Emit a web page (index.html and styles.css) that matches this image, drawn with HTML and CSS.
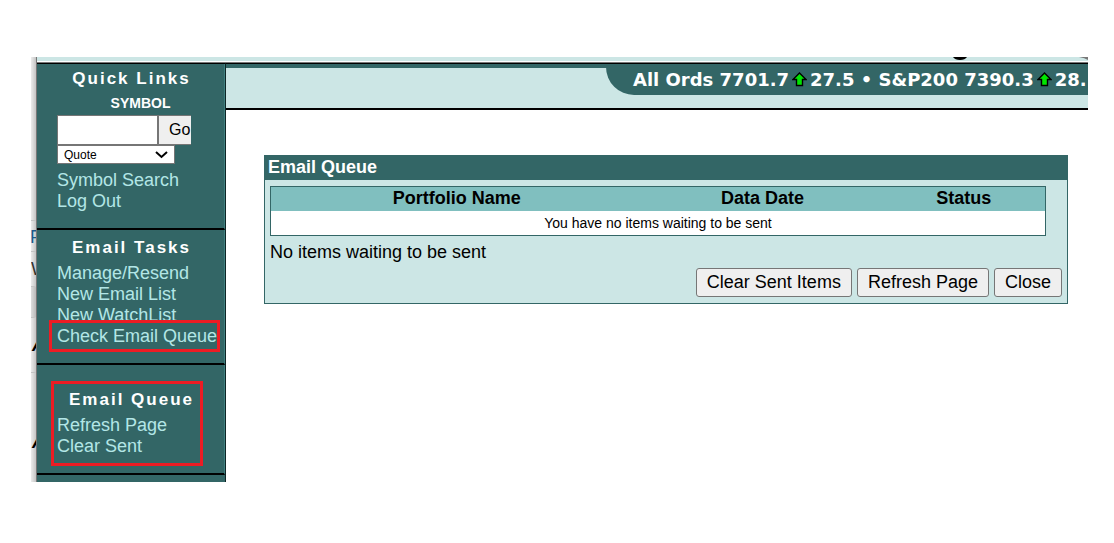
FILE: index.html
```html
<!DOCTYPE html>
<html lang="en">
<head>
  <meta charset="UTF-8">
  <meta name="viewport" content="width=device-width, initial-scale=1.0">
  <title>Email Queue</title>
  <link rel="stylesheet" href="styles.css">
</head>
<body>

  <div class="screen">

    <!-- edge of the window behind -->
    <div class="behind">
      <span class="behind-row first blue">P</span>
      <span class="behind-row short">W</span>
      <span class="behind-row shade"></span>
      <span class="behind-row tall">A</span>
      <span class="behind-row last">A</span>
    </div>

    <div class="window">
      <div class="banner">
        <svg class="banner-tail" width="14" height="3" viewBox="0 0 14 3"><path d="M0 0h14q-2 3-7 3t-7-3z"/></svg>
        <svg class="banner-corner" width="9" height="3" viewBox="0 0 9 3"><path d="M0 0h9v3q-3-2-9-3z"/></svg>
      </div>

      <div class="columns">
        <nav class="sidebar">
          <section class="menu quick">
            <h2>Quick Links</h2>
            <form class="search">
              <label for="symbol">SYMBOL</label>
              <div class="search-row">
                <input type="text" id="symbol">
                <button type="button">Go</button>
              </div>
              <div class="select-wrap">
                <select id="type" aria-label="Type">
                  <option>Quote</option>
                </select>
                <svg width="13" height="8" viewBox="0 0 13 8"><path d="M1 1l5.500 5 5.500-5"/></svg>
              </div>
            </form>
            <a href="#">Symbol Search</a>
            <a href="#">Log Out</a>
          </section>

          <section class="menu tasks">
            <h2>Email Tasks</h2>
            <a href="#">Manage/Resend</a>
            <a href="#">New Email List</a>
            <a href="#">New WatchList</a>
            <a href="#" class="marked">Check Email Queue</a>
          </section>

          <section class="menu queue">
            <h2>Email Queue</h2>
            <a href="#">Refresh Page</a>
            <a href="#">Clear Sent</a>
          </section>
        </nav>

        <main class="main">
          <div class="header">
            <div class="ticker">
              <span>All Ords 7701.7</span>
              <svg width="15" height="15" viewBox="0 0 15 15"><path d="M7.500 1L14 7.500H10.500V13.500H4.500V7.500H1z"/></svg>
              <span>27.5 • S&amp;P200 7390.3</span>
              <svg width="15" height="15" viewBox="0 0 15 15"><path d="M7.500 1L14 7.500H10.500V13.500H4.500V7.500H1z"/></svg>
              <span>28.</span>
            </div>
          </div>

          <div class="panel">
            <h1>Email Queue</h1>
            <div class="panel-body">
              <table>
                <thead>
                  <tr>
                    <th class="col-name">Portfolio Name</th>
                    <th class="col-date">Data Date</th>
                    <th class="col-status">Status</th>
                  </tr>
                </thead>
                <tbody>
                  <tr>
                    <td colspan="3">You have no items waiting to be sent</td>
                  </tr>
                </tbody>
              </table>
              <p>No items waiting to be sent</p>
              <div class="buttons">
                <button type="button">Clear Sent Items</button>
                <button type="button">Refresh Page</button>
                <button type="button">Close</button>
              </div>
            </div>
          </div>
        </main>
      </div>
    </div>

  </div>

</body>
</html>
```
FILE: styles.css
```css
* {
  box-sizing: border-box;
}

body {
  margin: 0;
  background: #fff;
  color: #000;
  font-family: Arial, "Liberation Sans", sans-serif;
  font-size: 18px;
}

.screen {
  display: flex;
  margin: 57px 26px 60px 31px;
  overflow: hidden;
}

/* window behind */
.behind {
  width: 6px;
  flex: none;
  overflow: hidden;
  padding-top: 163px;
  background: linear-gradient(to right, #ececec, #c4c4c4);
  border-right: 1px solid #777;
}

.behind-row {
  display: block;
  height: 55px;
  border-top: 1px solid #c4c4c4;
  line-height: 54px;
  color: #333;
}

.behind-row.first {
  height: 31px;
  line-height: 32px;
}

.behind-row.blue {
  text-indent: -1px;
  color: #1c5a8c;
}

.behind-row.short {
  height: 35px;
  line-height: 35px;
}

.behind-row.shade {
  height: 31px;
  background: rgba(0, 0, 0, 0.06);
}

.behind-row.tall,
.behind-row.last {
  font-weight: bold;
  font-style: italic;
  text-indent: 1px;
  color: #000;
}

.behind-row.last {
  line-height: 138px;
}

.window {
  flex: 1;
  min-width: 0;
}

.banner {
  position: relative;
  height: 5px;
  background: #cce6e5;
  border-bottom: 1px solid #fff;
}

.banner svg {
  display: block;
  position: absolute;
  top: 0;
}

.banner-tail {
  right: 121px;
}

.banner-corner {
  right: 0;
  fill: #777;
}

.columns {
  display: flex;
  border-top: 1px solid #777;
}

/* sidebar */
.sidebar {
  width: 189px;
  flex: none;
  padding-bottom: 7px;
  background: #336666;
  border-top: 1px solid #000;
  border-right: 1px solid #0d2626;
}

.menu {
  position: relative;
  padding: 4px 0 16px 20px;
  border-right: 1px solid #408080;
  border-bottom: 2px solid #000;
}

.menu h2 {
  margin: 0 0 5px;
  padding-right: 18px;
  text-align: center;
  font-size: 17px;
  line-height: 21px;
  letter-spacing: 2px;
  color: #fff;
}

.menu a {
  display: block;
  line-height: 21px;
  color: #b3e6e6;
  text-decoration: none;
  white-space: nowrap;
}

.menu.quick h2 {
  margin-bottom: 3px;
}

.menu.tasks {
  padding-top: 7px;
}

.menu.queue {
  padding-top: 24px;
}

/* red markers */
.marked {
  position: relative;
}

.marked::after,
.menu.queue::after {
  content: "";
  position: absolute;
  border: 3px solid #ed1c24;
}

.marked::after {
  inset: -6px 4px -5px -8px;
}

.menu.queue::after {
  inset: 16px 21px 7px 14px;
}

.search {
  margin-bottom: 6px;
}

.search label {
  display: block;
  text-align: center;
  font-size: 14px;
  font-weight: bold;
  line-height: 23px;
  color: #fff;
}

.search-row {
  display: flex;
  width: 134px;
  height: 30px;
  overflow: hidden;
}

.search-row input {
  width: 101px;
  flex: none;
  border: 1px solid #767676;
  background: #fff;
}

.search-row button {
  flex: none;
  padding: 0 10px;
  border: 1px solid #767676;
  background: #efefef;
  font: 16px Arial, "Liberation Sans", sans-serif;
}

.select-wrap {
  position: relative;
  width: 118px;
}

.select-wrap select {
  display: block;
  appearance: none;
  width: 100%;
  height: 19px;
  padding: 0 6px;
  border: 1px solid #767676;
  border-radius: 0;
  background: #fff;
  color: #000;
  font: 12px Arial, "Liberation Sans", sans-serif;
}

.select-wrap svg {
  position: absolute;
  top: 6px;
  right: 7px;
  fill: none;
  stroke: #000;
  stroke-width: 2;
  pointer-events: none;
}

/* content */
.main {
  flex: 1;
  min-width: 0;
}

.header {
  height: 47px;
  overflow: hidden;
  background: #cce6e5;
  border-top: 1px solid #000;
  border-bottom: 2px solid #000;
  box-shadow: inset 0 4px #336666;
}

.ticker {
  display: flex;
  align-items: center;
  gap: 3px;
  width: 482px;
  height: 31px;
  margin-left: auto;
  padding-left: 27px;
  overflow: hidden;
  background: #336666;
  border-bottom-left-radius: 28px;
  color: #fff;
  font: bold 18px Verdana, "DejaVu Sans", sans-serif;
  white-space: nowrap;
}

.ticker span,
.ticker svg {
  flex: none;
}

.ticker path {
  fill: #00e600;
  stroke: #000;
  stroke-width: 1.4;
}

.panel {
  margin: 45px 20px 0 38px;
  background: #cce6e5;
  border: 1px solid #336666;
}

.panel h1 {
  margin: 0;
  padding: 0 3px 2px;
  background: #336666;
  color: #fff;
  font-size: 18px;
  line-height: 22px;
}

.panel-body {
  padding: 6px 5px;
}

table {
  width: calc(100% - 16px);
  border: 1px solid #336666;
  border-spacing: 0;
  table-layout: fixed;
  background: #fff;
}

th {
  height: 24px;
  padding: 0 0 2px;
  background: #80bfbf;
  line-height: 22px;
}

td {
  height: 24px;
  padding: 0;
  text-align: center;
  font-size: 14px;
}

.col-name {
  width: 48%;
}

.col-date {
  width: 31%;
}

.col-status {
  width: 21%;
}

.panel p {
  margin: 5px 0;
  line-height: 22px;
}

.buttons {
  display: flex;
  justify-content: flex-end;
  gap: 5px;
}

.buttons button {
  height: 29px;
  padding: 0 10px;
  border: 1px solid #767676;
  border-radius: 3px;
  background: #efefef;
  color: #000;
  font: 18px Arial, "Liberation Sans", sans-serif;
}
```
